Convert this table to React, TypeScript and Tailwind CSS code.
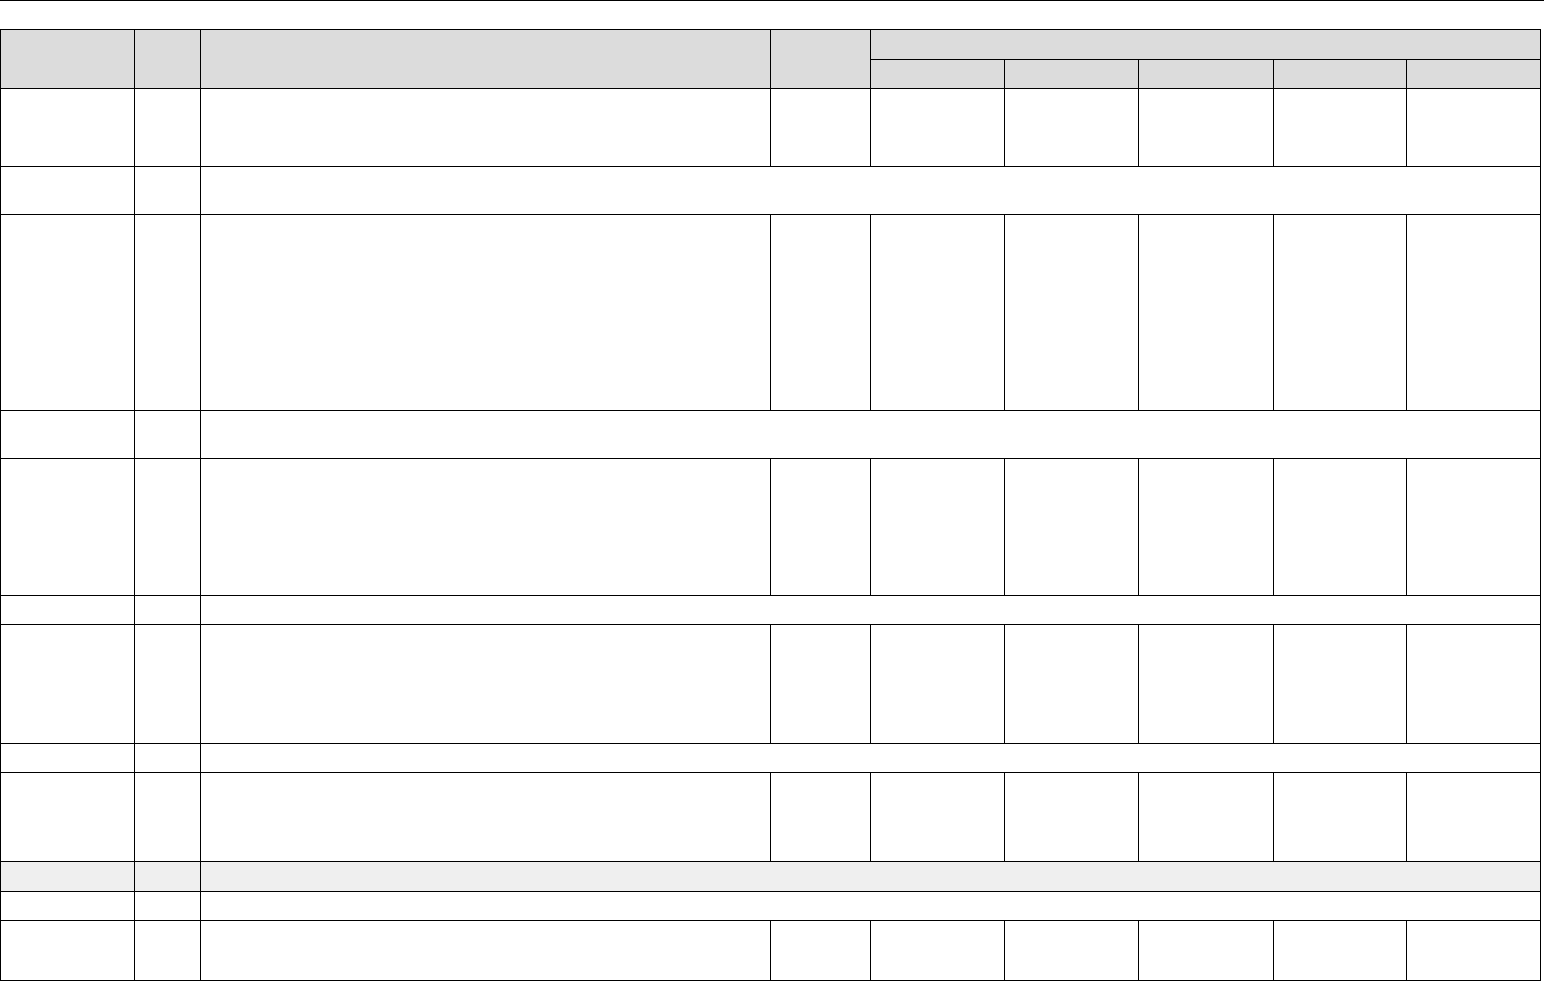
import React from 'react';

// row kinds: "full" = every column has its own cell, "span" = first two cells then one merged cell
const bodyRows: { kind: 'full' | 'span'; shaded?: boolean }[] = [
    { kind: 'full' },
    { kind: 'span' },
    { kind: 'full' },
    { kind: 'span' },
    { kind: 'full' },
    { kind: 'span' },
    { kind: 'full' },
    { kind: 'span' },
    { kind: 'full' },
    { kind: 'span', shaded: true },
    { kind: 'span' },
    { kind: 'full' },
];

const cell = 'border-r border-b border-black';

export default function App() {
    return (
        <div className="min-h-screen bg-white font-['Liberation_Sans',Arial,sans-serif] text-sm text-black">
            <div className="h-px w-full bg-black" />

            <div className="mt-[28px] grid w-[1541px] grid-cols-[134px_66px_570px_100px_134px_134px_135px_133px_134px] grid-rows-[30px_29px_78px_48px_196px_48px_137px_29px_119px_29px_89px_30px_29px_60px] border-l border-t border-black">
                {/* header */}
                <div className={`${cell} row-span-2 bg-[#dcdcdc]`} />
                <div className={`${cell} row-span-2 bg-[#dcdcdc]`} />
                <div className={`${cell} row-span-2 bg-[#dcdcdc]`} />
                <div className={`${cell} row-span-2 bg-[#dcdcdc]`} />
                <div className={`${cell} col-span-5 bg-[#dcdcdc]`} />
                {[0, 1, 2, 3, 4].map((i) => (
                    <div key={`h${i}`} className={`${cell} bg-[#dcdcdc]`} />
                ))}

                {/* body */}
                {bodyRows.map((row, r) => {
                    const bg = row.shaded ? 'bg-[#efefef]' : 'bg-white';
                    if (row.kind === 'span') {
                        return (
                            <React.Fragment key={r}>
                                <div className={`${cell} ${bg}`} />
                                <div className={`${cell} ${bg}`} />
                                <div className={`${cell} col-span-7 ${bg}`} />
                            </React.Fragment>
                        );
                    }
                    return (
                        <React.Fragment key={r}>
                            {[0, 1, 2, 3, 4, 5, 6, 7, 8].map((c) => (
                                <div key={c} className={`${cell} ${bg}`} />
                            ))}
                        </React.Fragment>
                    );
                })}
            </div>
        </div>
    );
}
